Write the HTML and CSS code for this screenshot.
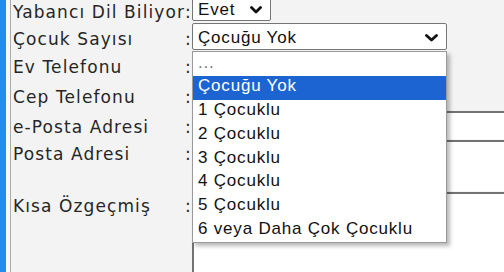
FILE: index.html
```html
<!DOCTYPE html>
<html lang="tr">
<head>
<meta charset="utf-8">
<title>Form</title>
<link rel="stylesheet" href="styles.css">
</head>
<body>
<div class="page">
  <div class="stripe"></div>
  <div class="gutter"></div>
  <div class="content">
    <div class="form">
      <div class="label">Yabancı Dil Biliyor</div>
      <div class="colon">:</div>
      <div class="field">
        <div class="select select-small">
          <span class="select-text">Evet</span>
          <svg class="chev" width="12" height="8" viewBox="0 0 12 8"><polyline points="1.5,1.5 6,6 10.5,1.5" fill="none" stroke="#111" stroke-width="2.8" stroke-linecap="round" stroke-linejoin="round"/></svg>
        </div>
      </div>

      <div class="label">Çocuk Sayısı</div>
      <div class="colon">:</div>
      <div class="field">
        <div class="select select-wide">
          <span class="select-text">Çocuğu Yok</span>
          <svg class="chev" width="13" height="8" viewBox="0 0 13 8"><polyline points="1.5,1.5 6.5,6 11.5,1.5" fill="none" stroke="#111" stroke-width="2.8" stroke-linecap="round" stroke-linejoin="round"/></svg>
          <div class="dropdown">
            <div class="opt opt-muted">...</div>
            <div class="opt opt-active">Çocuğu Yok</div>
            <div class="opt">1 Çocuklu</div>
            <div class="opt">2 Çocuklu</div>
            <div class="opt">3 Çocuklu</div>
            <div class="opt">4 Çocuklu</div>
            <div class="opt">5 Çocuklu</div>
            <div class="opt">6 veya Daha Çok Çocuklu</div>
          </div>
        </div>
      </div>

      <div class="label">Ev Telefonu</div>
      <div class="colon">:</div>
      <div class="field"><div class="input input-short"></div></div>

      <div class="label">Cep Telefonu</div>
      <div class="colon">:</div>
      <div class="field"><div class="input input-short"></div></div>

      <div class="label">e-Posta Adresi</div>
      <div class="colon">:</div>
      <div class="field"><div class="input input-long"></div></div>

      <div class="label label-top">Posta Adresi</div>
      <div class="colon label-top">:</div>
      <div class="field"><div class="input input-long textarea-small"></div></div>

      <div class="label label-top">Kısa Özgeçmiş</div>
      <div class="colon label-top">:</div>
      <div class="field"><div class="input input-long textarea-big"></div></div>
    </div>
  </div>
</div>
</body>
</html>
```

FILE: styles.css
```css
html, body {
  margin: 0;
  padding: 0;
  width: 504px;
  height: 272px;
  overflow: hidden;
  background: #f3f3f3;
}

.page {
  display: flex;
  height: 272px;
}

.stripe {
  width: 6px;
  flex: none;
  background: #1e8ff0;
}

.gutter {
  width: 4px;
  flex: none;
  background: #f8f8f8;
}

.content {
  flex: 1;
  border-left: 1px solid #acacac;
  background: #f3f3f3;
  padding-left: 2px;
  overflow: hidden;
}

.form {
  display: grid;
  grid-template-columns: 172px 7px 1fr;
  grid-template-rows: 27px 28px 30px 30px 29px 52px 100px;
  margin-top: -4px;
}

.label,
.colon {
  font-family: "DejaVu Sans", Verdana, sans-serif;
  font-size: 17px;
  letter-spacing: 1.1px;
  color: #262626;
  white-space: nowrap;
  padding-top: 6px;
  line-height: normal;
}

.colon {
  letter-spacing: 0;
}

.label-top {
  padding-top: 3.5px;
}

.field {
  position: relative;
  min-width: 0;
}

.select {
  position: relative;
  box-sizing: border-box;
  display: flex;
  align-items: center;
  justify-content: space-between;
  background: #fff;
  border: 1px solid #767676;
  border-radius: 2px;
  padding: 2px 8px 0 5px;
  font-family: "Liberation Sans", Arial, sans-serif;
  font-size: 17px;
  letter-spacing: 0.8px;
  color: #111;
}

.select-text {
  line-height: 20px;
}

.select-small {
  width: 79px;
  height: 25px;
}

.select-wide {
  width: 255px;
  height: 27px;
}

.chev {
  display: block;
  flex: none;
}

.dropdown {
  position: absolute;
  left: -1px;
  top: 27px;
  width: 255px;
  box-sizing: border-box;
  background: #fff;
  border: 1px solid #9a9a9a;
  box-shadow: 3px 3px 4px rgba(0, 0, 0, 0.28);
  z-index: 5;
}

.opt {
  box-sizing: border-box;
  height: 23.75px;
  line-height: 20px;
  padding: 0.5px 0 0 5px;
  white-space: nowrap;
  color: #111;
}

.opt-muted {
  color: #777;
}

.opt-active {
  background: #1b64d2;
  color: #fff;
}

.input {
  box-sizing: border-box;
  background: #fff;
  border-top: 2px solid #737373;
  border-left: 2px solid #737373;
  border-right: 1px solid #e6e6e6;
  border-bottom: 1px solid #f6f6f6;
}

.input-short {
  width: 240px;
  height: 29px;
}

.input-long {
  width: 400px;
  height: 29px;
}

.textarea-small {
  height: 52px;
}

.textarea-big {
  height: 100px;
}
```
